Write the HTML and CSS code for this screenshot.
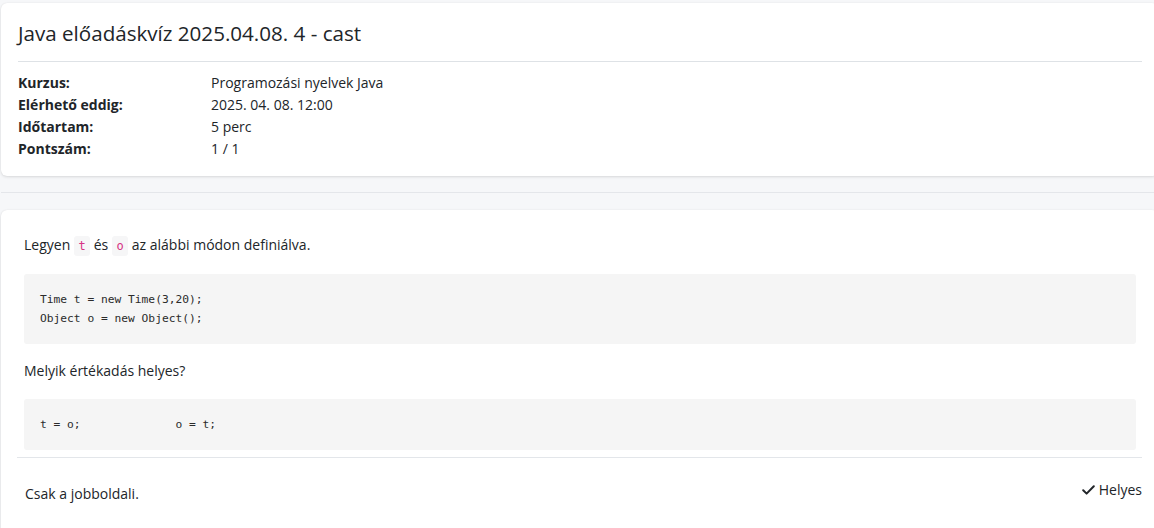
FILE: index.html
```html
<!DOCTYPE html>
<html lang="hu">
<head>
<meta charset="utf-8">
<title>Java előadáskvíz</title>
<link rel="stylesheet" href="styles.css">
</head>
<body>
<div class="page">
  <section class="card info-card">
    <h1 class="title">Java előadáskvíz 2025.04.08. 4 - cast</h1>
    <hr class="rule">
    <dl class="meta">
      <dt>Kurzus:</dt><dd>Programozási nyelvek Java</dd>
      <dt>Elérhető eddig:</dt><dd>2025. 04. 08. 12:00</dd>
      <dt>Időtartam:</dt><dd>5 perc</dd>
      <dt>Pontszám:</dt><dd>1 / 1</dd>
    </dl>
  </section>
  <div class="divider"></div>
  <section class="card question-card">
    <div class="question">
      <p class="text">Legyen <code class="inline">t</code> és <code class="inline">o</code> az alábbi módon definiálva.</p>
      <pre class="block">Time t = new Time(3,20);
Object o = new Object();</pre>
      <p class="text">Melyik értékadás helyes?</p>
      <pre class="block">t = o;              o = t;</pre>
    </div>
    <hr class="rule answer-rule">
    <div class="answer">
      <span class="answer-text">Csak a jobboldali.</span>
      <span class="status"><svg class="check" width="13" height="10" viewBox="0 0 13 10"><path d="M1.2 5.2 L4.6 8.6 L11.8 1.2" fill="none" stroke="#212529" stroke-width="2" stroke-linecap="round" stroke-linejoin="round"/></svg>Helyes</span>
    </div>
  </section>
</div>
</body>
</html>
```

FILE: styles.css
```css
html, body {
  margin: 0;
  padding: 0;
  overflow: hidden;
}
body {
  background: #f6f7f9;
  font-family: "Open Sans", "Noto Sans", sans-serif;
  font-size: 14px;
  color: #212529;
}
.page {
  width: 1157px;
  padding: 3px 0 0 1px;
}
.card {
  background: #fff;
  border-radius: 6px;
  box-shadow: 0 1px 3px rgba(0, 0, 0, 0.12), 0 0 1px rgba(0, 0, 0, 0.08);
}
.info-card {
  padding: 18px 16px 16px 17px;
}
.title {
  margin: 0;
  font-size: 20.6px;
  font-weight: 500;
  line-height: 24px;
}
.rule {
  border: 0;
  border-top: 1px solid #dee2e6;
  margin: 16px 0 10px 0;
}
.meta {
  display: grid;
  grid-template-columns: 193px 1fr;
  margin: 0;
  line-height: 22px;
}
.meta dt {
  font-weight: 700;
}
.meta dd {
  margin: 0;
}
.divider {
  margin-top: 16px;
  border-top: 1px solid #e4e6ea;
  height: 17px;
}
.question-card {
  padding: 16px 16px 20px 16px;
  min-height: 320px;
}
.question {
  padding: 8px 6px 0 7px;
}
.text {
  margin: 0 0 17px 0;
  line-height: 22px;
}
.inline {
  font-family: "DejaVu Sans Mono", "Liberation Mono", monospace;
  font-size: 12px;
  color: #d63384;
  background: #f6f6f7;
  border-radius: 3px;
  padding: 3px 4.5px;
}
.block {
  margin: 0 0 16px 0;
  padding: 16px;
  background: #f5f5f5;
  border-radius: 3px;
  font-family: "DejaVu Sans Mono", "Liberation Mono", monospace;
  font-size: 11.25px;
  line-height: 19px;
  color: #2b2b2b;
}
.answer-rule {
  margin: -9px 0 0 0;
  border-top-color: #e3e6ea;
}
.answer {
  display: flex;
  justify-content: space-between;
  align-items: flex-start;
  padding: 21px 0 0 8px;
}
.answer-text {
  padding-top: 4px;
  line-height: 22px;
}
.status {
  display: flex;
  align-items: center;
  gap: 4px;
  line-height: 22px;
}
.check {
  display: block;
}
```
